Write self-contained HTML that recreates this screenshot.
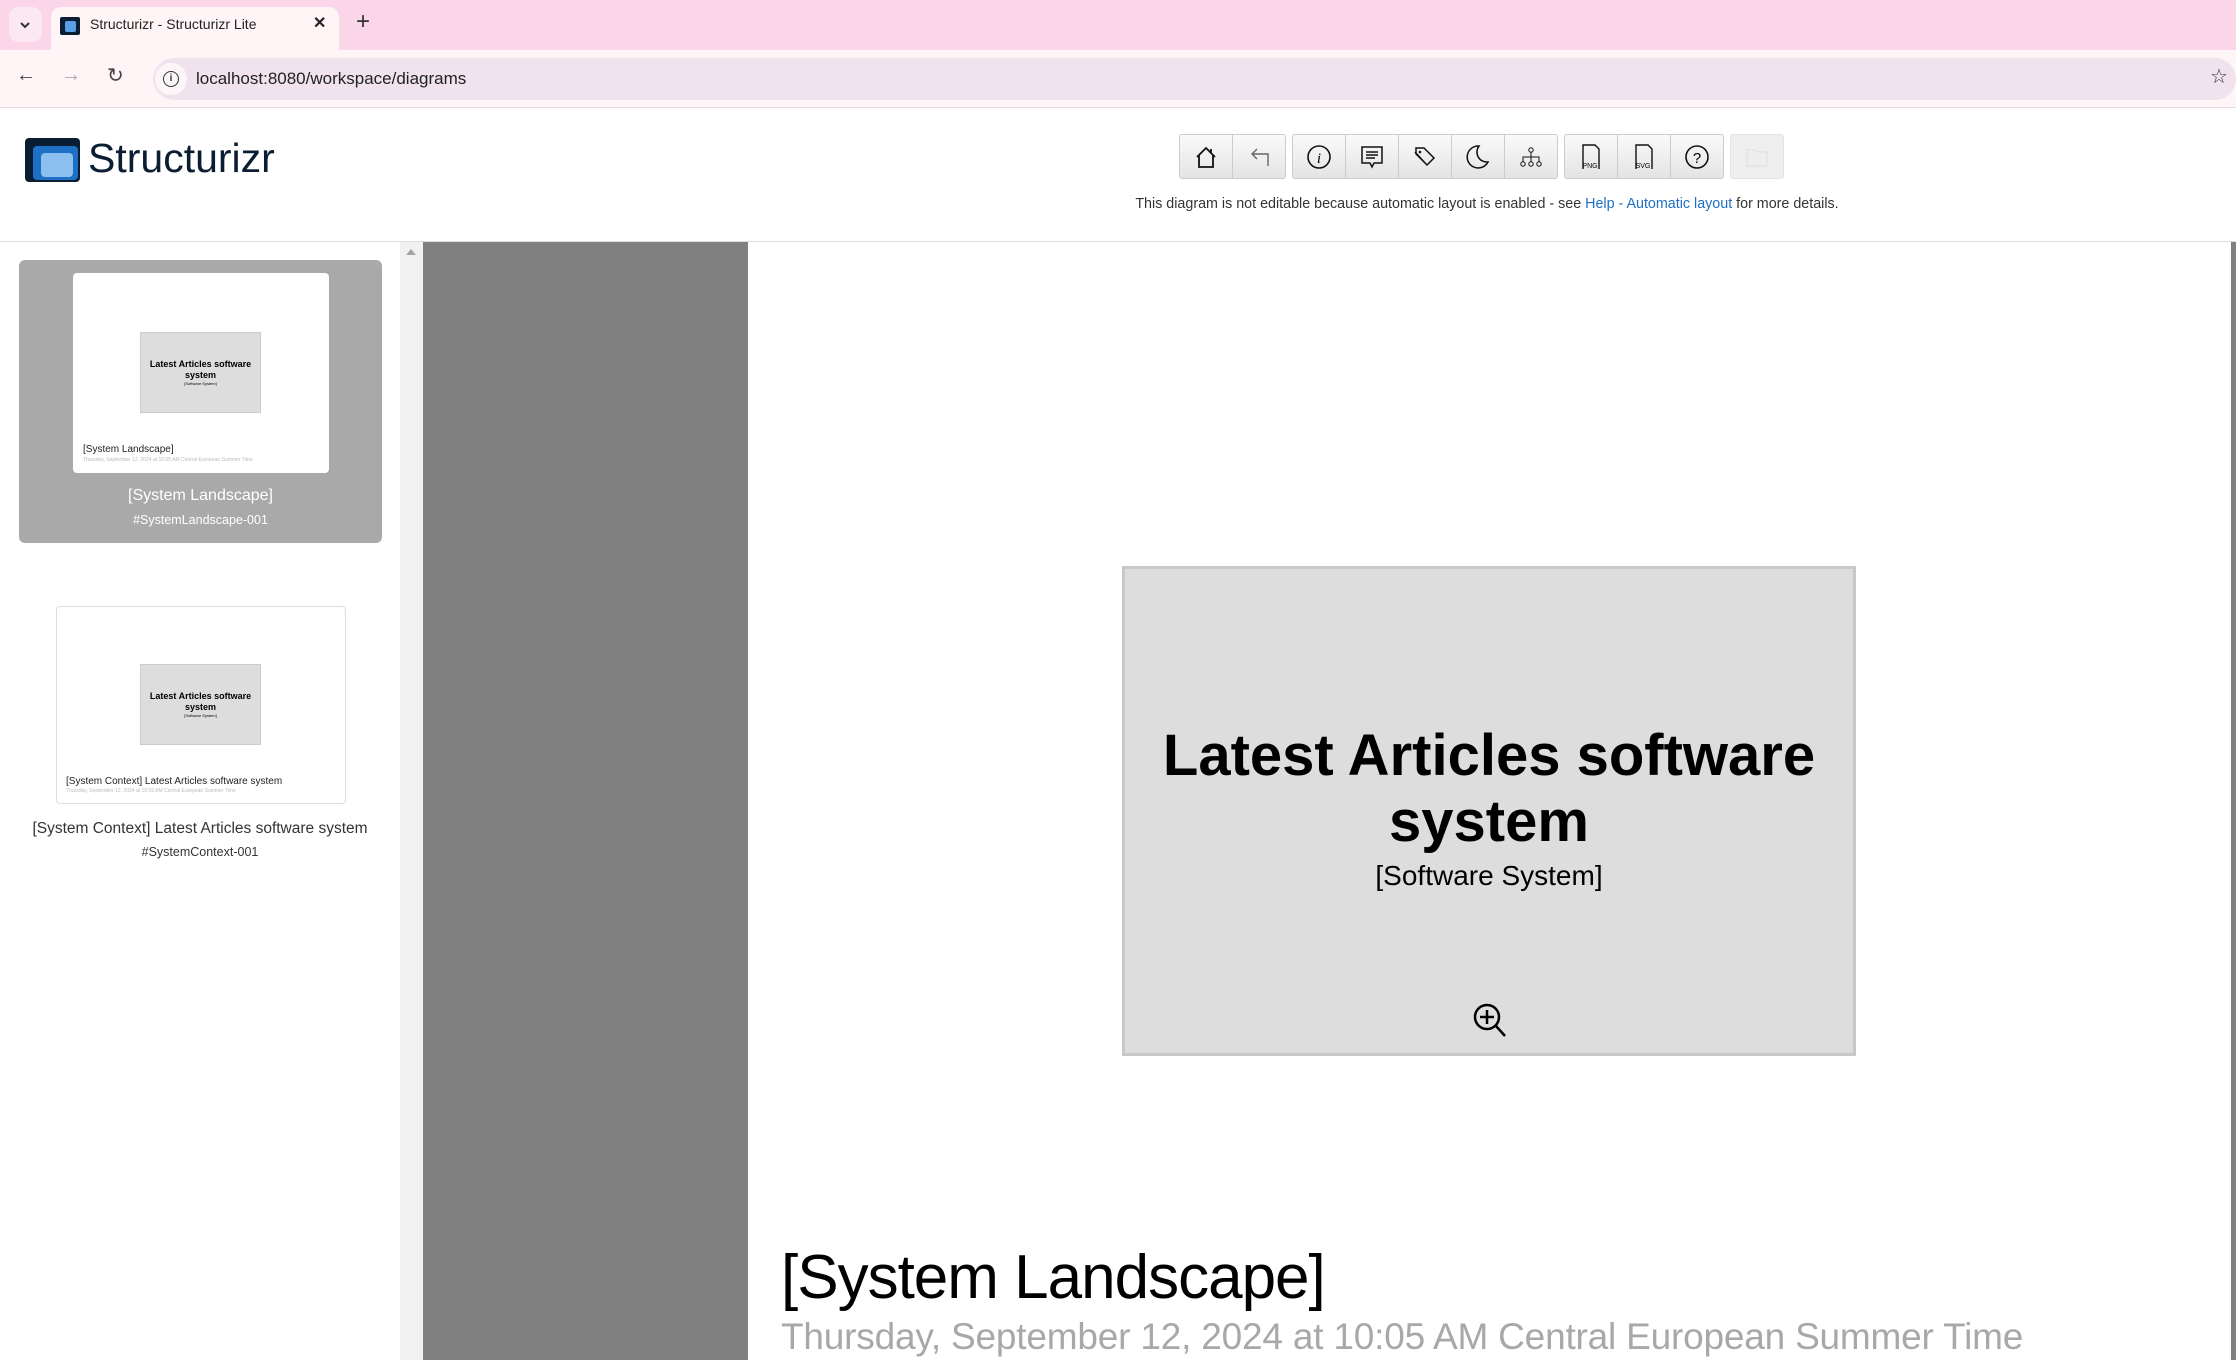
<!DOCTYPE html>
<html><head><meta charset="utf-8"><style>
*{margin:0;padding:0;box-sizing:border-box}
body{width:2236px;height:1360px;overflow:hidden;background:#fff;font-family:"Liberation Sans",sans-serif;position:relative}
.a{position:absolute}
.btn{position:absolute;top:134px;width:54px;height:45px;background:linear-gradient(#fafafa,#e4e4e4);border:1px solid #ccc;display:flex;align-items:center;justify-content:center}
.c{text-align:center;white-space:nowrap}
</style></head><body>
<!-- tab bar -->
<div class="a" style="left:0;top:0;width:2236px;height:50px;background:#fad6e8"></div>
<div class="a" style="left:9px;top:7px;width:33px;height:35px;border-radius:10px;background:#fbe8f1"></div>
<svg class="a" style="left:18px;top:18px" width="14" height="14"><path d="M3 5l4 4 4-4" stroke="#333" stroke-width="2" fill="none"/></svg>
<div class="a" style="left:51px;top:7px;width:288px;height:45px;background:#fff5f7;border-radius:10px 10px 0 0"></div>
<div class="a" style="left:60px;top:17px;width:20px;height:18px;background:#0b1d33;border-radius:2px"></div>
<div class="a" style="left:65px;top:21px;width:11px;height:11px;background:#5a9ee8;border-radius:2px"></div>
<div class="a" style="left:90px;top:16px;font-size:14px;color:#222">Structurizr - Structurizr Lite</div>
<div class="a" style="left:313px;top:13px;font-size:16px;color:#222;font-weight:bold">✕</div>
<div class="a" style="left:356px;top:8px;font-size:24px;color:#333">+</div>
<!-- address bar -->
<div class="a" style="left:0;top:50px;width:2236px;height:58px;background:#fff5f7;border-bottom:1px solid #f1d9e2"></div>
<div class="a" style="left:16px;top:64px;font-size:20px;color:#444">←</div>
<div class="a" style="left:61px;top:64px;font-size:20px;color:#aaa">→</div>
<div class="a" style="left:107px;top:63px;font-size:20px;color:#444">↻</div>
<div class="a" style="left:153px;top:58px;width:2083px;height:42px;background:#f0e3ee;border-radius:21px"></div>
<div class="a" style="left:155px;top:63px;width:32px;height:32px;border-radius:16px;background:#fdf6f9"></div>
<div class="a" style="left:163px;top:71px;width:16px;height:16px;border:1.5px solid #333;border-radius:50%;font-size:10px;text-align:center;line-height:13px;font-weight:bold;color:#333">i</div>
<div class="a" style="left:196px;top:69px;font-size:17px;color:#222">localhost:8080/workspace/diagrams</div>
<div class="a" style="left:2210px;top:64px;font-size:20px;color:#333">☆</div>
<!-- header -->
<div class="a" style="left:25px;top:138px;width:55px;height:44px;background:#0b1d33;border-radius:4px"></div>
<div class="a" style="left:33px;top:146px;width:45px;height:34px;background:#1e6fc6;border-radius:4px"></div>
<div class="a" style="left:41px;top:153px;width:32px;height:24px;background:#8bbff0;border-radius:4px"></div>
<div class="a" style="left:88px;top:135px;font-size:41px;color:#0b1d33">Structurizr</div>

<div class="btn" style="left:1179px;border-radius:3px 0 0 3px"><svg width="26" height="26"><path d="M4 13L13 4l9 9M6 11v12h14V11M18 5v4" stroke="#111" stroke-width="1.8" fill="none"/></svg></div>
<div class="btn" style="left:1232px;border-radius:0 3px 3px 0"><svg width="26" height="26"><path d="M22 22V10H6M11 5L6 10l5 5" stroke="#666" stroke-width="1.4" fill="none"/></svg></div>
<div class="btn" style="left:1292px;border-radius:3px 0 0 3px"><svg width="26" height="26"><circle cx="13" cy="13" r="11" stroke="#111" stroke-width="1.6" fill="none"/><text x="13" y="19" font-size="15" font-style="italic" text-anchor="middle" font-family="Liberation Serif">i</text></svg></div>
<div class="btn" style="left:1345px"><svg width="26" height="26"><path d="M3 3h20v16h-8l-2 4-2-4H3z M7 8h12M7 11h12M7 14h9" stroke="#111" stroke-width="1.5" fill="none"/></svg></div>
<div class="btn" style="left:1398px"><svg width="26" height="26"><path d="M4 4h8l10 10-7 7L4 10z M3 8l11 12" stroke="#111" stroke-width="1.5" fill="none"/><circle cx="8" cy="8" r="1.3" fill="#111"/></svg></div>
<div class="btn" style="left:1451px"><svg width="26" height="26"><path d="M14 2a11 11 0 1 0 9 16A10 10 0 0 1 14 2z" stroke="#111" stroke-width="1.5" fill="none"/></svg></div>
<div class="btn" style="left:1504px;border-radius:0 3px 3px 0"><svg width="26" height="26"><circle cx="13" cy="6" r="2.2" stroke="#111" fill="none"/><circle cx="5" cy="20" r="2.2" stroke="#111" fill="none"/><circle cx="13" cy="20" r="2.2" stroke="#111" fill="none"/><circle cx="21" cy="20" r="2.2" stroke="#111" fill="none"/><path d="M13 8v5M5 18v-5h16v5M13 13v5" stroke="#111" fill="none"/></svg></div>
<div class="btn" style="left:1564px;border-radius:3px 0 0 3px"><svg width="26" height="30"><path d="M5 27V3h12l4 4v20" stroke="#111" stroke-width="1.4" fill="none"/><text x="12" y="26" font-size="7" text-anchor="middle">PNG</text></svg></div>
<div class="btn" style="left:1617px"><svg width="26" height="30"><path d="M5 27V3h12l4 4v20" stroke="#111" stroke-width="1.4" fill="none"/><text x="12" y="26" font-size="7" text-anchor="middle">SVG</text></svg></div>
<div class="btn" style="left:1670px;border-radius:0 3px 3px 0"><svg width="26" height="26"><circle cx="13" cy="13" r="11" stroke="#111" stroke-width="1.6" fill="none"/><text x="13" y="19" font-size="15" text-anchor="middle">?</text></svg></div>
<div class="btn" style="left:1730px;border-radius:3px;background:#eee;border-color:#e4e4e4"><svg width="26" height="26"><path d="M3 6h8l2 2h10v14H3z" stroke="#ddd" fill="none"/></svg></div>
<div class="a c" style="left:1132px;top:196px;width:710px;font-size:14.3px;color:#333">This diagram is not editable because automatic layout is enabled - see <span style="color:#1f6fc6">Help - Automatic layout</span> for more details.</div>
<div class="a" style="left:0;top:241px;width:2236px;height:1px;background:#ddd"></div>

<!-- sidebar -->
<div class="a" style="left:400px;top:242px;width:23px;height:1118px;background:#f1f1f1"></div>
<div class="a" style="left:406px;top:249px;width:0;height:0;border-left:5px solid transparent;border-right:5px solid transparent;border-bottom:6px solid #a3a3a3"></div>
<div class="a" style="left:19px;top:260px;width:363px;height:283px;background:#a9a9a9;border-radius:6px"></div>
<div class="a" style="left:73px;top:273px;width:256px;height:200px;background:#fff;border-radius:4px"></div>
<div class="a c" style="left:140px;top:332px;width:121px;height:81px;background:#ddd;border:1px solid #ccc;font-size:9px;font-weight:bold;padding-top:26px;line-height:11px">Latest Articles software<br>system<div style="font-size:4px;font-weight:normal;line-height:6px">[Software System]</div></div>
<div class="a" style="left:83px;top:444px;font-size:10px;color:#222">[System Landscape]</div>
<div class="a" style="left:83px;top:457px;font-size:5px;color:#bbb">Thursday, September 12, 2024 at 10:05 AM Central European Summer Time</div>
<div class="a c" style="left:19px;top:487px;width:363px;font-size:16px;color:#fff">[System Landscape]</div>
<div class="a c" style="left:19px;top:513px;width:363px;font-size:12.5px;color:#fff">#SystemLandscape-001</div>

<div class="a" style="left:56px;top:606px;width:290px;height:198px;background:#fff;border:1px solid #ddd;border-radius:4px"></div>
<div class="a c" style="left:140px;top:664px;width:121px;height:81px;background:#ddd;border:1px solid #ccc;font-size:9px;font-weight:bold;padding-top:26px;line-height:11px">Latest Articles software<br>system<div style="font-size:4px;font-weight:normal;line-height:6px">[Software System]</div></div>
<div class="a" style="left:66px;top:776px;font-size:10px;color:#222">[System Context] Latest Articles software system</div>
<div class="a" style="left:66px;top:788px;font-size:5px;color:#bbb">Thursday, September 12, 2024 at 10:03 AM Central European Summer Time</div>
<div class="a c" style="left:0;top:820px;width:400px;font-size:15.5px;color:#333">[System Context] Latest Articles software system</div>
<div class="a c" style="left:0;top:845px;width:400px;font-size:12.5px;color:#333">#SystemContext-001</div>

<!-- main -->
<div class="a" style="left:423px;top:242px;width:325px;height:1118px;background:#808080"></div>
<div class="a" style="left:2231px;top:242px;width:5px;height:1118px;background:#808080"></div>
<div class="a c" style="left:1122px;top:566px;width:734px;height:490px;background:#ddd;border:3px solid #c8c8c8"></div>
<div class="a c" style="left:1122px;top:723px;width:734px;font-size:58px;font-weight:bold;color:#000;line-height:66px">Latest Articles software<br>system</div>
<div class="a c" style="left:1122px;top:860px;width:734px;font-size:28px;color:#000">[Software System]</div>
<svg class="a" style="left:1470px;top:1000px" width="40" height="40"><circle cx="17" cy="17" r="12" stroke="#000" stroke-width="2.5" fill="none"/><path d="M17 10v14M10 17h14M26 26l9 10" stroke="#000" stroke-width="2.5"/></svg>
<div class="a" style="left:781px;top:1242px;font-size:62px;color:#000;letter-spacing:-1px">[System Landscape]</div>
<div class="a" style="left:781px;top:1316px;font-size:37px;color:#a8a8a8;letter-spacing:-0.2px">Thursday, September 12, 2024 at 10:05 AM Central European Summer Time</div>
</body></html>
